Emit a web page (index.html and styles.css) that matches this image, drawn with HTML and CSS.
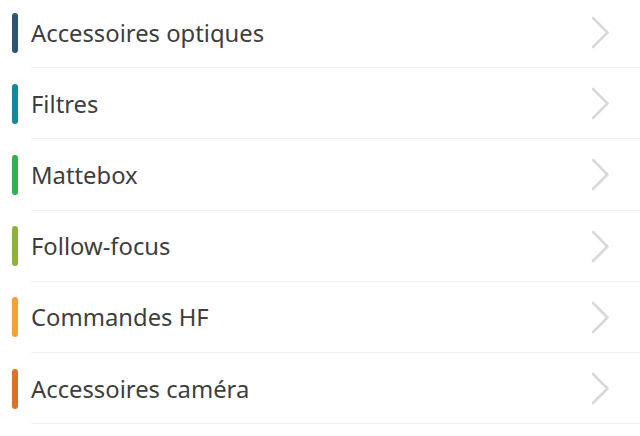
FILE: index.html
```html
<!DOCTYPE html>
<html lang="fr">
<head>
    <meta charset="UTF-8">
    <meta name="viewport" content="width=device-width, initial-scale=1.0">
    <title>Catégories</title>
    <link rel="stylesheet" href="styles.css">
</head>
<body>
    <ul class="menu">
        <li class="item">
            <span class="tag optiques"></span>
            <div class="body">
                <span class="label">Accessoires optiques</span>
                <svg class="chevron" width="19" height="33" viewBox="0 0 19 33"><path d="M2 2 L16.5 16.5 L2 31" /></svg>
            </div>
        </li>
        <li class="item">
            <span class="tag filtres"></span>
            <div class="body">
                <span class="label">Filtres</span>
                <svg class="chevron" width="19" height="33" viewBox="0 0 19 33"><path d="M2 2 L16.5 16.5 L2 31" /></svg>
            </div>
        </li>
        <li class="item">
            <span class="tag mattebox"></span>
            <div class="body">
                <span class="label">Mattebox</span>
                <svg class="chevron" width="19" height="33" viewBox="0 0 19 33"><path d="M2 2 L16.5 16.5 L2 31" /></svg>
            </div>
        </li>
        <li class="item">
            <span class="tag focus"></span>
            <div class="body">
                <span class="label">Follow-focus</span>
                <svg class="chevron" width="19" height="33" viewBox="0 0 19 33"><path d="M2 2 L16.5 16.5 L2 31" /></svg>
            </div>
        </li>
        <li class="item">
            <span class="tag hf"></span>
            <div class="body">
                <span class="label">Commandes HF</span>
                <svg class="chevron" width="19" height="33" viewBox="0 0 19 33"><path d="M2 2 L16.5 16.5 L2 31" /></svg>
            </div>
        </li>
        <li class="item">
            <span class="tag camera"></span>
            <div class="body">
                <span class="label">Accessoires caméra</span>
                <svg class="chevron" width="19" height="33" viewBox="0 0 19 33"><path d="M2 2 L16.5 16.5 L2 31" /></svg>
            </div>
        </li>
    </ul>
</body>
</html>
```
FILE: styles.css
```css
body {
    margin: 0;
    background: #fff;
    font-family: "Noto Sans", "Open Sans", sans-serif;
    overflow: hidden;
}

.menu {
    list-style: none;
    margin: -3px 0 0 0;
    padding: 0;
}

.item {
    display: flex;
    align-items: center;
    height: 71.2px;
}

.tag {
    width: 6px;
    height: 40px;
    margin-left: 12px;
    margin-right: 13px;
    border-radius: 3px;
    flex-shrink: 0;
}

.optiques { background: #2a5872; }
.filtres { background: #138a9c; }
.mattebox { background: #35b04f; }
.focus { background: #8fb33a; }
.hf { background: #f3a233; }
.camera { background: #dd7127; }

.body {
    flex: 1;
    height: 100%;
    box-sizing: border-box;
    display: flex;
    align-items: center;
    justify-content: space-between;
    border-bottom: 1px solid #f1f1f1;
    padding-right: 30px;
}

.label {
    font-size: 23.8px;
    color: #3e3e3e;
    margin-top: 1px;
}

.chevron {
    fill: none;
    stroke: #d8d8d8;
    stroke-width: 2.6;
    stroke-linecap: round;
    stroke-linejoin: round;
    margin-top: 1px;
}
```
